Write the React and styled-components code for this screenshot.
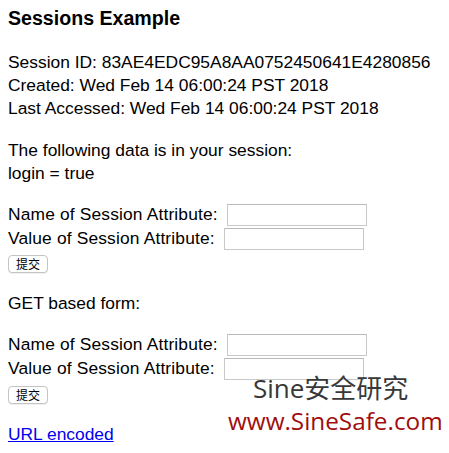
import React from "react";
import styled, { createGlobalStyle } from "styled-components";

const GlobalStyle = createGlobalStyle`
  html, body {
    margin: 0;
    padding: 0;
    background: #fff;
  }
  body {
    font-family: "Liberation Sans", Arial, Helvetica, sans-serif;
    color: #000;
  }
`;

const Page = styled.div`
  position: relative;
  width: 449px;
  height: 453px;
  padding: 0 8px;
  box-sizing: border-box;
  overflow: hidden;
  font-size: 17.4px;
  line-height: 23px;
`;

const Title = styled.h3`
  margin: 6px 0 21px;
  font-size: 19.6px;
  line-height: 24px;
  font-weight: bold;
`;

const Block = styled.div`
  margin-bottom: ${(p) => p.gap || 18}px;
`;

const Line = styled.div`
  white-space: nowrap;
`;

const Row = styled.div`
  display: flex;
  align-items: center;
  height: 24px;
  white-space: nowrap;
`;

const Label = styled.span`
  margin-right: 9px;
  letter-spacing: 0.15px;
`;

const TextInput = styled.input`
  box-sizing: border-box;
  width: 140px;
  height: 22px;
  margin: 2px 0 0;
  padding: 1px 3px;
  border: 1px solid #c9c9c9;
  border-top-color: #b9b9b9;
  background: #fff;
  font: inherit;
  font-size: 13px;
`;

const Submit = styled.button`
  display: block;
  box-sizing: border-box;
  height: 18px;
  margin: ${(p) => p.top}px 0 19px;
  padding: 0 7px;
  border: 1px solid #c4c4c4;
  border-radius: 4px;
  background: #fff;
  box-shadow: 0 1px 0 rgba(0, 0, 0, 0.06);
  font-family: "Noto Sans CJK SC", sans-serif;
  font-size: 12px;
  line-height: 16px;
  color: #000;
`;

const Link = styled.a`
  color: #0000ee;
  text-decoration: underline;
`;

const Mark = styled.div`
  position: absolute;
  left: ${(p) => p.x}px;
  top: ${(p) => p.y}px;
  font-family: "Open Sans", "Noto Sans CJK SC", sans-serif;
  font-size: ${(p) => p.size}px;
  line-height: 1;
  color: ${(p) => p.color};
  white-space: nowrap;
  pointer-events: none;
`;

const SessionForm = ({ buttonTop }) => (
  <form onSubmit={(e) => e.preventDefault()}>
    <Row>
      <Label>Name of Session Attribute:</Label>
      <TextInput type="text" name="dataname" />
    </Row>
    <Row>
      <Label>Value of Session Attribute:</Label>
      <TextInput type="text" name="datavalue" />
    </Row>
    <Submit type="submit" top={buttonTop}>提交</Submit>
  </form>
);

const App = () => {
  return (
    <Page>
      <GlobalStyle />
      <Title>Sessions Example</Title>
      <Block gap={19}>
        <Line>Session ID: 83AE4EDC95A8AA0752450641E4280856</Line>
        <Line>Created: Wed Feb 14 06:00:24 PST 2018</Line>
        <Line>Last Accessed: Wed Feb 14 06:00:24 PST 2018</Line>
      </Block>
      <Block gap={17}>
        <Line>The following data is in your session:</Line>
        <Line>login = true</Line>
      </Block>
      <SessionForm buttonTop={5} />
      <Block gap={17}>
        <Line>GET based form:</Line>
      </Block>
      <SessionForm buttonTop={6} />
      <Line>
        <Link href="#">URL encoded</Link>
      </Line>
      <Mark x={253} y={375} size={26} color="#383838">
        Sine安全研究
      </Mark>
      <Mark x={228} y={409} size={24.3} color="#a00d0d">
        www.SineSafe.com
      </Mark>
    </Page>
  );
};

export default App;
